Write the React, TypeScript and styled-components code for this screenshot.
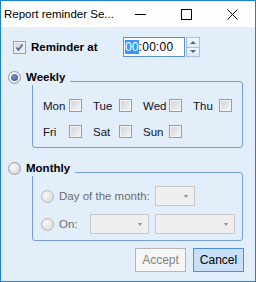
import React from 'react';
import styled, { createGlobalStyle } from 'styled-components';

const GlobalStyle = createGlobalStyle`
  html, body {
    margin: 0;
    padding: 0;
    background: #fff;
  }
  body {
    font-family: "Liberation Sans", Arial, sans-serif;
  }
`;

const Window = styled.div`
  width: 256px;
  height: 282px;
  box-sizing: border-box;
  border: 1px solid #1a80d8;
  display: flex;
  flex-direction: column;
  background: #e3eefb;
`;

const TitleBar = styled.div`
  height: 26px;
  background: #fff;
  display: flex;
  align-items: center;
`;

const Title = styled.div`
  flex: 1;
  padding-left: 3px;
  font-size: 11.5px;
  color: #000;
  white-space: nowrap;
`;

const CaptionButton = styled.div`
  width: 46px;
  height: 26px;
  display: flex;
  align-items: center;
  justify-content: center;
`;

const Client = styled.div`
  flex: 1;
  display: flex;
  flex-direction: column;
  padding: 10px 11px 0 12px;
  font-size: 11px;
  color: #111122;
`;

const Row = styled.div`
  display: flex;
  align-items: center;
`;

const ReminderRow = styled(Row)`
  height: 20px;
`;

const BoldLabel = styled.span<{ width?: number }>`
  font-weight: bold;
  font-size: 11.5px;
  color: #000;
  margin-left: 5px;
  ${p => (p.width ? `width: ${p.width}px;` : '')}
`;

const TimeBox = styled.div`
  width: 62px;
  height: 20px;
  box-sizing: border-box;
  border: 1px solid #5b8fd6;
  background: #fff;
  display: flex;
  align-items: center;
  padding-left: 1px;
  font-size: 12px;
  letter-spacing: 0.2px;
  color: #000;
`;

const Selected = styled.span`
  background: #3399ff;
  color: #fff;
`;

const Spinner = styled.div`
  width: 14px;
  height: 20px;
  margin-left: 1px;
  display: flex;
  flex-direction: column;
`;

const SpinButton = styled.div<{ down?: boolean }>`
  flex: 1;
  box-sizing: border-box;
  border: 1px solid #a9bfdc;
  ${p => (p.down ? 'border-top: none;' : '')}
  background: linear-gradient(#f3f7fd, #dde8f6);
  display: flex;
  align-items: center;
  justify-content: center;
  &::after {
    content: '';
    border-left: 3.5px solid transparent;
    border-right: 3.5px solid transparent;
    ${p => (p.down ? 'border-top: 3px solid #4e6690;' : 'border-bottom: 3px solid #4e6690;')}
  }
`;

const Header = styled.div<{ top: number }>`
  position: relative;
  z-index: 1;
  align-self: flex-start;
  display: flex;
  align-items: center;
  height: 16px;
  margin: ${p => p.top}px 0 0 -5px;
  padding-right: 5px;
  background: #e3eefb;
`;

const GroupBox = styled.div`
  margin: -4px 1px 0 19px;
  border: 1px solid #769ed8;
  border-radius: 3px;
`;

const DaysGrid = styled.div`
  display: grid;
  grid-template-columns: repeat(4, 50px);
  row-gap: 13px;
  padding: 17px 0 9px 10px;
`;

const DayCell = styled.div`
  display: flex;
  align-items: center;
`;

const DayLabel = styled.span`
  width: 26px;
  font-size: 11.5px;
`;

const MonthlyBody = styled.div`
  display: flex;
  flex-direction: column;
  gap: 8px;
  padding: 13px 0 6px 8px;
`;

const OptionRow = styled(Row)`
  height: 20px;
`;

const DisabledLabel = styled.span<{ width: number }>`
  width: ${p => p.width}px;
  margin-left: 5px;
  color: #6d6d6d;
  font-size: 11.5px;
`;

const Combo = styled.div<{ width: number }>`
  width: ${p => p.width}px;
  height: 20px;
  box-sizing: border-box;
  border: 1px solid #c8c8c8;
  background: #efefef;
  display: flex;
  align-items: center;
  justify-content: flex-end;
  padding-right: 6px;
  & + & {
    margin-left: 6px;
  }
  &::after {
    content: '';
    border-left: 2.5px solid transparent;
    border-right: 2.5px solid transparent;
    border-top: 3px solid #8c8c8c;
  }
`;

const ButtonRow = styled.div`
  display: flex;
  justify-content: flex-end;
  gap: 7px;
  margin-top: 7px;
`;

const Button = styled.div<{ primary?: boolean }>`
  width: 51px;
  height: 24px;
  box-sizing: border-box;
  display: flex;
  align-items: center;
  justify-content: center;
  font-size: 12px;
  border: 1px solid ${p => (p.primary ? '#4d8fdc' : '#b4b4b4')};
  background: ${p => (p.primary ? '#c8dff7' : '#f6f6f6')};
  color: ${p => (p.primary ? '#000' : '#838383')};
`;

const CheckFrame = styled.div`
  width: 13px;
  height: 13px;
  box-sizing: border-box;
  flex-shrink: 0;
  border: 1px solid #9a9ea4;
  box-shadow: inset 0 0 0 1px #f4f4f4;
  background: linear-gradient(135deg, #cfd2d7, #f7f7f7);
  display: flex;
  align-items: center;
  justify-content: center;
`;

const RadioOuter = styled.div<{ disabled?: boolean }>`
  width: 13px;
  height: 13px;
  box-sizing: border-box;
  flex-shrink: 0;
  border-radius: 50%;
  border: 1px solid ${p => (p.disabled ? '#b8b8b8' : '#9a9da2')};
  background: ${p =>
    p.disabled
      ? 'radial-gradient(circle at 35% 35%, #f8f8f8, #d6d6d6)'
      : 'radial-gradient(circle at 35% 35%, #fdfdfd, #c9ccd1)'};
  display: flex;
  align-items: center;
  justify-content: center;
`;

const RadioDot = styled.div`
  width: 7px;
  height: 7px;
  border-radius: 50%;
  background: radial-gradient(circle at 40% 35%, #7b95cc, #2f4d8c);
  box-shadow: 0 0 0 1px #fff;
`;

const Checkbox: React.FC<{ checked?: boolean }> = ({ checked }) => (
  <CheckFrame>
    {checked && (
      <svg width="9" height="9" viewBox="0 0 9 9">
        <path d="M1.5 4.5 L3.5 7 L7.5 1.5" fill="none" stroke="#4a62a0" strokeWidth="1.6" />
      </svg>
    )}
  </CheckFrame>
);

const Radio: React.FC<{ checked?: boolean; disabled?: boolean }> = ({ checked, disabled }) => (
  <RadioOuter disabled={disabled}>{checked && <RadioDot />}</RadioOuter>
);

const days = ['Mon', 'Tue', 'Wed', 'Thu', 'Fri', 'Sat', 'Sun'];

const App: React.FC = () => {
  return (
    <>
      <GlobalStyle />
      <Window>
        <TitleBar>
          <Title>Report reminder Se...</Title>
          <CaptionButton>
            <svg width="11" height="11" viewBox="0 0 11 11">
              <path d="M0 5.5 H11" stroke="#000" strokeWidth="1" />
            </svg>
          </CaptionButton>
          <CaptionButton>
            <svg width="11" height="11" viewBox="0 0 11 11">
              <rect x="0.5" y="0.5" width="10" height="10" fill="none" stroke="#000" strokeWidth="1" />
            </svg>
          </CaptionButton>
          <CaptionButton>
            <svg width="11" height="11" viewBox="0 0 11 11">
              <path d="M0.5 0.5 L10.5 10.5 M10.5 0.5 L0.5 10.5" stroke="#000" strokeWidth="1" />
            </svg>
          </CaptionButton>
        </TitleBar>
        <Client>
          <ReminderRow>
            <Checkbox checked />
            <BoldLabel width={92}>Reminder at</BoldLabel>
            <TimeBox>
              <Selected>00</Selected>:00:00
            </TimeBox>
            <Spinner>
              <SpinButton />
              <SpinButton down />
            </Spinner>
          </ReminderRow>

          <Header top={12}>
            <Radio checked />
            <BoldLabel>Weekly</BoldLabel>
          </Header>
          <GroupBox>
            <DaysGrid>
              {days.map(d => (
                <DayCell key={d}>
                  <DayLabel>{d}</DayLabel>
                  <Checkbox />
                </DayCell>
              ))}
            </DaysGrid>
          </GroupBox>

          <Header top={12}>
            <Radio />
            <BoldLabel>Monthly</BoldLabel>
          </Header>
          <GroupBox>
            <MonthlyBody>
              <OptionRow>
                <Radio disabled />
                <DisabledLabel width={96}>Day of the month:</DisabledLabel>
                <Combo width={40} />
              </OptionRow>
              <OptionRow>
                <Radio disabled />
                <DisabledLabel width={31}>On:</DisabledLabel>
                <Combo width={59} />
                <Combo width={80} />
              </OptionRow>
            </MonthlyBody>
          </GroupBox>

          <ButtonRow>
            <Button>Accept</Button>
            <Button primary>Cancel</Button>
          </ButtonRow>
        </Client>
      </Window>
    </>
  );
};

export default App;
